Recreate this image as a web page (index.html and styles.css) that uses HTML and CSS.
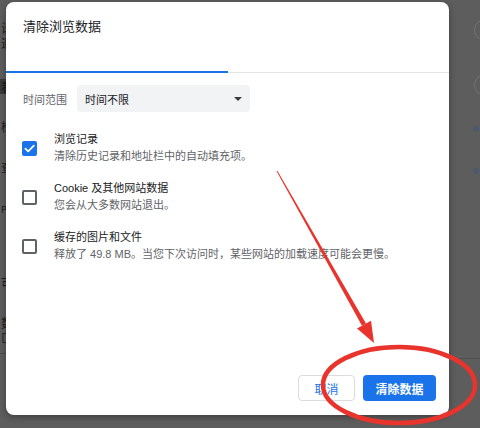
FILE: index.html
```html
<!DOCTYPE html>
<html>
	<head>
		<meta charset="utf-8">
		<title>清除浏览数据</title>
		<link rel="stylesheet" href="styles.css">
	</head>
	<body>
		<!-- 后面被遮住的设置页 -->
		<div class="backdrop">
			<div class="peek-left">
				<div class="pair first"><span>设</span><span>迎</span></div>
				<div class="line dark"><span>看</span></div>
				<div class="line"><span>检</span></div>
				<div class="line"><span>查</span></div>
				<div class="line tiny"><span>P</span></div>
				<div class="line far"><span>可</span></div>
				<div class="pair"><span>数</span><span>匚</span></div>
				<div class="rule"></div>
			</div>
			<div class="peek-right">
				<div class="ring"></div>
				<div class="ring"></div>
				<div class="dot"></div>
				<div class="dot"></div>
				<div class="rule"></div>
			</div>
		</div>

		<div class="dialog">
			<div class="title">清除浏览数据</div>
			<div class="tabs">
				<div class="tab active"></div>
			</div>

			<div class="range">
				<span class="range_label">时间范围</span>
				<div class="select">
					<span>时间不限</span>
					<i class="caret"></i>
				</div>
			</div>

			<ul class="options">
				<li>
					<span class="check on">
						<svg viewBox="0 0 16 16" width="15" height="15"><path d="M3.6 8.2 L6.6 11.1 L12.6 4.9" fill="none" stroke="#fff" stroke-width="1.9" stroke-linecap="round" stroke-linejoin="round"/></svg>
					</span>
					<div class="text">
						<div class="name">浏览记录</div>
						<div class="desc">清除历史记录和地址栏中的自动填充项。</div>
					</div>
				</li>
				<li>
					<span class="check"></span>
					<div class="text">
						<div class="name">Cookie 及其他网站数据</div>
						<div class="desc">您会从大多数网站退出。</div>
					</div>
				</li>
				<li>
					<span class="check"></span>
					<div class="text">
						<div class="name">缓存的图片和文件</div>
						<div class="desc">释放了 49.8 MB。当您下次访问时，某些网站的加载速度可能会更慢。</div>
					</div>
				</li>
			</ul>

			<div class="footer">
				<button class="btn cancel">取消</button>
				<button class="btn primary">清除数据</button>
			</div>
		</div>

		<!-- 红色标注 -->
		<svg class="mark" width="480" height="428" viewBox="0 0 480 428">
			<polygon points="276.6,171.3 277.4,170.7 366,323.4 362,325.8" fill="#e8342c"/>
			<polygon points="374,343 357,328.5 371,320.7" fill="#e8342c"/>
			<ellipse cx="399" cy="385" rx="76" ry="38" fill="none" stroke="#e8342c" stroke-width="4.5"/>
		</svg>
	</body>
</html>
```

FILE: styles.css
```css
* {
	box-sizing: border-box;
}

body {
	margin: 0;
	width: 480px;
	height: 428px;
	overflow: hidden;
	position: relative;
	background-color: #5d5d5d;
	font-family: "Liberation Sans", "Noto Sans CJK SC", sans-serif;
}

ul,
li {
	list-style: none;
	margin: 0;
	padding: 0;
}

.backdrop {
	display: flex;
	justify-content: space-between;
	height: 100%;
}

.peek-left {
	width: 7px;
	overflow: hidden;
	color: #1c1c1c;
	font-size: 12px;
	font-family: "Noto Sans CJK SC", sans-serif;
}

.peek-left span {
	display: block;
	flex: none;
}

.peek-left .pair,
.peek-left .line {
	display: flex;
	flex-direction: column;
	align-items: flex-end;
	line-height: 15px;
	overflow: hidden;
}

.peek-left .pair span,
.peek-left .line span {
	width: 12px;
	height: 15px;
	margin-right: -6px;
	text-align: left;
}

.peek-left .first {
	margin-top: 20px;
}

.peek-left .line {
	margin-top: 25px;
}

.peek-left .dark {
	margin-top: 29px;
	background-color: #3a3a3a;
}

.peek-left .tiny {
	font-size: 9px;
	margin-top: 28px;
}

.peek-left .far {
	margin-top: 58px;
}

.peek-left .rule {
	margin-top: 8px;
	height: 1px;
	background-color: #4a4a4a;
}

.peek-left .far + .pair {
	margin-top: 25px;
}

.peek-right {
	width: 31px;
	display: flex;
	flex-direction: column;
	align-items: flex-end;
}

.peek-right .ring {
	width: 22px;
	height: 22px;
	margin-right: -16px;
	border: 1px solid #727272;
	border-radius: 50%;
	margin-top: 19px;
}

.peek-right .ring + .ring {
	margin-top: 33px;
}

.peek-right .dot {
	width: 6px;
	height: 6px;
	margin-right: 1px;
	border-radius: 50%;
	background-color: #4c5870;
	margin-top: 30px;
}

.peek-right .dot + .dot {
	margin-top: 36px;
}

.peek-right .rule {
	width: 100%;
	height: 1px;
	margin-top: 184px;
	background-color: #505050;
}

/* 弹窗 */
.dialog {
	position: absolute;
	left: 6px;
	top: 2px;
	width: 443px;
	height: 413px;
	display: flex;
	flex-direction: column;
	background-color: #fff;
	border-radius: 8px;
	box-shadow: 0 2px 6px rgba(0, 0, 0, 0.35);
	color: #202124;
}

.title {
	padding: 16px 17px 0;
	font-size: 13px;
	line-height: 16px;
	font-family: "Noto Sans CJK SC", sans-serif;
}

.tabs {
	display: flex;
	height: 39px;
	border-bottom: 1px solid #e3e4e6;
}

.tab {
	width: 222px;
	height: 39px;
	border-bottom: 2px solid #1a73e8;
}

.range {
	display: flex;
	align-items: center;
	gap: 10px;
	margin-top: 12px;
	padding-left: 17px;
	font-size: 11px;
	font-family: "Noto Sans CJK SC", sans-serif;
}

.range_label {
	color: #5f6368;
}

.select {
	display: flex;
	align-items: center;
	justify-content: space-between;
	width: 173px;
	height: 27px;
	padding: 0 8px 0 8px;
	background-color: #f1f3f4;
	border-radius: 4px;
	color: #202124;
}

.caret {
	width: 0;
	height: 0;
	border-left: 4px solid transparent;
	border-right: 4px solid transparent;
	border-top: 4px solid #3c3c3c;
}

.options {
	margin-top: 19px;
	padding-left: 16px;
	display: flex;
	flex-direction: column;
	gap: 15px;
}

.options > li {
	display: flex;
	align-items: center;
	gap: 17px;
}

.check {
	flex: none;
	width: 15px;
	height: 15px;
	border: 2px solid #5f6368;
	border-radius: 2px;
}

.check.on {
	border: none;
	background-color: #1a73e8;
}

.check svg {
	display: block;
}

.text {
	font-size: 11px;
	line-height: 17px;
}

.name {
	color: #202124;
}

.desc {
	color: #5f6368;
}

.footer {
	margin-top: auto;
	display: flex;
	justify-content: flex-end;
	gap: 8px;
	padding: 0 13px 14px 0;
}

.btn {
	height: 26px;
	border-radius: 4px;
	font-size: 12px;
	font-family: "Noto Sans CJK SC", sans-serif;
	padding: 0;
	cursor: pointer;
}

.cancel {
	width: 57px;
	border: 1px solid #dadce0;
	background-color: #fff;
	color: #1a73e8;
}

.primary {
	width: 73px;
	border: none;
	background-color: #1a73e8;
	color: #fff;
	font-weight: bold;
}

.mark {
	position: absolute;
	left: 0;
	top: 0;
	pointer-events: none;
}
```
